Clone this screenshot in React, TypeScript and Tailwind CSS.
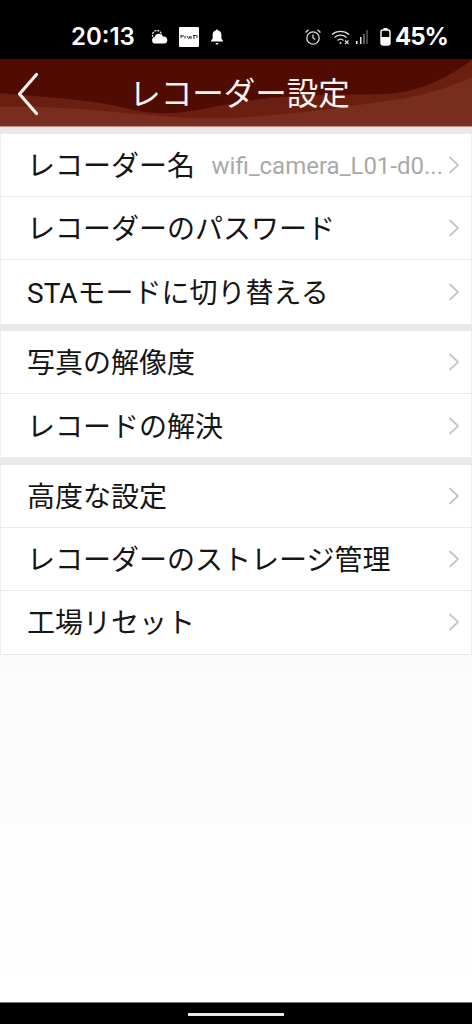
import React from "react";

const GROUPS = [
  [
    { label: "レコーダー名", value: "wifi_camera_L01-d0..." },
    { label: "レコーダーのパスワード" },
    { label: "STAモードに切り替える" },
  ],
  [{ label: "写真の解像度" }, { label: "レコードの解決" }],
  [{ label: "高度な設定" }, { label: "レコーダーのストレージ管理" }, { label: "工場リセット" }],
];

const StatusBar: React.FC = () => (
  <div className="flex h-[59px] shrink-0 items-center bg-black pl-[71px] pr-[24px] pt-[14px] font-['Inter',sans-serif] text-white">
    <span className="text-[24px] font-semibold leading-none">20:13</span>
    <svg className="ml-[15px]" width="19" height="18" viewBox="0 0 19 18" fill="none">
      <circle cx="7" cy="7" r="4.5" stroke="#ddd" strokeWidth="1.4" strokeDasharray="2 1" />
      <path d="M5 15.5a3.3 3.3 0 0 1-.3-6.5 4.4 4.4 0 0 1 8.3-.4 3.5 3.5 0 0 1 1.500 6.900z" fill="#fff" />
    </svg>
    <div className="ml-[10px] flex h-[20px] w-[20px] items-center justify-center rounded-[1px] bg-white">
      <svg width="18" height="6" viewBox="0 0 18 6" fill="none">
        <path d="M1 1v3M1 2h3M5 2v2.500M7 2c2 4 2 3 3 0M11 2v3M13 1.500h3M14 1v4M17 1v3" stroke="#222" strokeWidth="1" />
      </svg>
    </div>
    <svg className="ml-[11px]" width="14" height="18" viewBox="0 0 14 18" fill="#fff">
      <path d="M7 1.500c.7 0 1.100.5 1.100 1.100a4.400 4.400 0 0 1 3.300 4.300v3.600l1.600 2.200v.8H1v-.8l1.600-2.200V6.900a4.400 4.400 0 0 1 3.300-4.300c0-.6.400-1.100 1.100-1.100zM5.500 15h3a1.500 1.500 0 0 1-3 0z" />
    </svg>
    <svg className="ml-auto" width="18" height="18" viewBox="0 0 18 18" fill="none" stroke="#ddd" strokeWidth="1.300">
      <circle cx="9" cy="10" r="6.200" />
      <path d="M9 6.500V10l2.300 1.500M1.500 4.500 4.500 1.800M16.500 4.500 13.500 1.800" />
    </svg>
    <svg className="ml-[9px]" width="25" height="18" viewBox="0 0 25 18" fill="none" stroke="#ddd">
      <path d="M1 6.500a13 13 0 0 1 17 0M3.500 9.500a9 9 0 0 1 12 0M6.500 12.500a4.500 4.500 0 0 1 6 0" strokeWidth="1.200" />
      <circle cx="9.500" cy="15" r="1" fill="#ddd" stroke="none" />
      <path d="M14 12.500l3.500 3.500M17.500 12.500l-3.500 3.500" strokeWidth="1.200" />
    </svg>
    <svg width="12" height="18" viewBox="0 0 12 18" fill="#bbb">
      <rect x="0" y="13" width="1.500" height="3" fill="#fff" />
      <rect x="4" y="9" width="1.500" height="7" fill="#ddd" />
      <rect x="7.500" y="6" width="1" height="10" />
      <rect x="10.500" y="2" width="1" height="14" fill="#888" />
    </svg>
    <svg className="ml-[12px]" width="11" height="20" viewBox="0 0 11 20" fill="none">
      <rect x="3.500" y="1" width="4" height="2" fill="#fff" />
      <rect x="1" y="3" width="9" height="15" rx="2" stroke="#fff" strokeWidth="1.400" />
      <path d="M1 10h9v6a2 2 0 0 1-2 2H3a2 2 0 0 1-2-2z" fill="#fff" />
    </svg>
    <span className="ml-[4px] text-[24px] font-bold leading-none tracking-[-1px]">45%</span>
  </div>
);

const Header: React.FC = () => (
  <div className="relative flex h-[67px] shrink-0 items-center justify-center overflow-hidden bg-[#500c03] pl-[7px] pt-[4px]">
    <svg className="absolute inset-0" width="472" height="67" viewBox="0 0 472 67" preserveAspectRatio="none">
      <path d="M0 34C40 38 90 40 130 50C170 60 200 50 235 44C290 34 340 36 385 35C420 33 445 20 472 1V67H0Z" fill="#6a1f10" />
      <path d="M0 48C60 46 130 55 190 59C250 62 330 50 400 40C430 35 455 26 472 18V67H0Z" fill="#772e1f" />
    </svg>
    <svg className="absolute left-[17px] top-[13px]" width="22" height="44" viewBox="0 0 22 44" fill="none">
      <path d="M19.500 2.500 2.500 22l17 19.500" stroke="#fdf3f0" strokeWidth="3.200" strokeLinecap="round" strokeLinejoin="round" />
    </svg>
    <h1 className="relative text-[31.500px] font-normal leading-none text-[#fdf3f0]">レコーダー設定</h1>
  </div>
);

const Chevron: React.FC<{ className?: string }> = ({ className = "" }) => (
  <svg className={`shrink-0 ${className}`} width="12" height="18" viewBox="0 0 12 18" fill="none">
    <path d="M2 1.500 10 9l-8 7.500" stroke="#c6c6c6" strokeWidth="1.800" strokeLinecap="round" strokeLinejoin="round" />
  </svg>
);

const Row: React.FC<{ label: string; value?: string; last: boolean }> = ({ label, value, last }) => (
  <div
    className={`flex h-[63.200px] items-center pl-[26px] pr-[11px] ${last ? "" : "border-b border-[#e9e9e9]"}`}
  >
    <span className="whitespace-nowrap pt-[4px] text-[28px] leading-none text-[#151515]">{label}</span>
    {value && (
      <span className="ml-auto whitespace-nowrap pt-[2px] text-[24px] leading-none text-[#a9a9a9]">
        {value}
      </span>
    )}
    <Chevron className={value ? "ml-[5px]" : "ml-auto"} />
  </div>
);

export default function App() {
  return (
    <div className="flex h-[1024px] w-[472px] flex-col overflow-hidden bg-[#fafafa] font-['Roboto','Noto_Sans_CJK_JP',sans-serif]">
      <StatusBar />
      <Header />
      <div className="h-[1px] shrink-0 bg-[#c98d88]" />
      <main className="flex-1 bg-gradient-to-b from-[#f5f5f5] to-white">
        <div className="flex flex-col gap-[7.500px] bg-[#e9e9e9] pt-[7px]">
          {GROUPS.map((group, i) => (
            <div key={i} className="border-x border-[#eeeeee] bg-white">
              {group.map((row, j) => (
                <Row key={row.label} label={row.label} value={row.value} last={i !== 2 && j === group.length - 1} />
              ))}
            </div>
          ))}
        </div>
      </main>
      <div className="flex h-[22px] shrink-0 justify-center border-t border-[#777] bg-black pt-[10px]">
        <div className="h-[3px] w-[96px] bg-[#e8e8e8]" />
      </div>
    </div>
  );
}
